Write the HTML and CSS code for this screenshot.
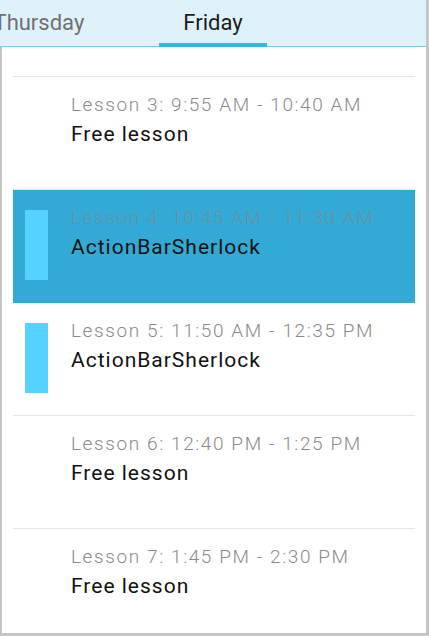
FILE: index.html
```html
<!DOCTYPE html>
<html>
<head>
<meta charset="utf-8">
<link rel="stylesheet" href="styles.css">
</head>
<body>
<div class="frame">
  <div class="tabbar">
    <div class="tab">Thursday</div>
    <div class="tab active">Friday</div>
  </div>
  <div class="content">
    <div class="list">
      <div class="row">
        <div class="bar none"></div>
        <div class="text">
          <div class="time">Lesson 3: 9:55 AM - 10:40 AM</div>
          <div class="title">Free lesson</div>
        </div>
      </div>
      <div class="row selected">
        <div class="bar"></div>
        <div class="text">
          <div class="time">Lesson 4: 10:45 AM - 11:30 AM</div>
          <div class="title">ActionBarSherlock</div>
        </div>
      </div>
      <div class="row">
        <div class="bar"></div>
        <div class="text">
          <div class="time">Lesson 5: 11:50 AM - 12:35 PM</div>
          <div class="title">ActionBarSherlock</div>
        </div>
      </div>
      <div class="row">
        <div class="bar none"></div>
        <div class="text">
          <div class="time">Lesson 6: 12:40 PM - 1:25 PM</div>
          <div class="title">Free lesson</div>
        </div>
      </div>
      <div class="row">
        <div class="bar none"></div>
        <div class="text">
          <div class="time">Lesson 7: 1:45 PM - 2:30 PM</div>
          <div class="title">Free lesson</div>
        </div>
      </div>
    </div>
  </div>
</div>
</body>
</html>
```
FILE: styles.css
```css
html, body {
  margin: 0;
  padding: 0;
  background: #ffffff;
}
.frame {
  width: 429px;
  height: 636px;
  box-sizing: border-box;
  border-right: 3px solid #c6c6c6;
  display: flex;
  flex-direction: column;
  overflow: hidden;
  font-family: Roboto, "Liberation Sans", sans-serif;
}
.tabbar {
  height: 46px;
  flex: none;
  background: #dff2fb;
  border-bottom: 1px solid #7ccbe9;
  display: flex;
  align-items: stretch;
  margin-left: -31px;
  gap: 50px;
}
.tab {
  font-size: 22px;
  color: #707070;
  padding: 3px 24.5px 0;
  line-height: 40px;
  height: 46px;
  box-sizing: border-box;
  white-space: nowrap;
}
.tab.active {
  color: #1c1c1c;
  border-bottom: 4px solid #33b5e5;
  height: 47px;
  margin-bottom: -1px;
}
.content {
  flex: 1;
  min-height: 0;
  border-left: 2px solid #c6c6c6;
  border-bottom: 3px solid #c6c6c6;
  overflow: hidden;
}
.list {
  margin: 0 11px;
  padding-top: 29px;
}
.list::before {
  content: "";
  display: block;
  height: 1px;
  background: #e6e6e6;
}
.row {
  height: 113px;
  box-sizing: border-box;
  border-bottom: 1px solid #e6e6e6;
  display: flex;
  align-items: flex-start;
  padding: 17px 0 0 12px;
}
.row.selected {
  background: #33aad6;
  border-bottom-color: #33aad6;
}
.bar {
  width: 23px;
  height: 70px;
  margin-top: 3px;
  background: #55d2ff;
  flex: none;
}
.bar.none {
  background: transparent;
}
.text {
  margin-left: 23px;
}
.time {
  font-size: 19px;
  font-weight: 300;
  letter-spacing: 1.6px;
  line-height: 22px;
  color: #8a8a8a;
  white-space: nowrap;
}
.selected .time {
  color: #6a8fa0;
}
.title {
  margin-top: 6px;
  font-size: 21px;
  letter-spacing: 1px;
  line-height: 24px;
  color: #111111;
  white-space: nowrap;
}
```
